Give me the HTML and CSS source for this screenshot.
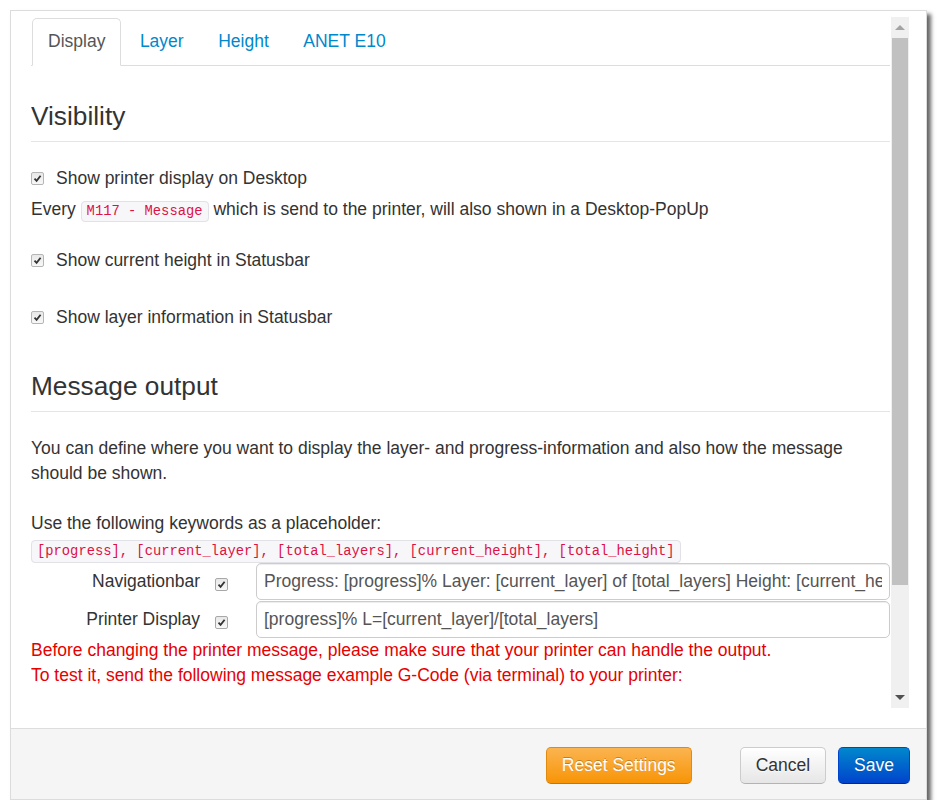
FILE: index.html
```html
<!DOCTYPE html>
<html>
<head>
<meta charset="utf-8">
<link rel="stylesheet" href="styles.css">
</head>
<body>
<div class="modal">
  <div class="modal-body">
    <div class="scroll-content">
      <ul class="nav-tabs">
        <li class="tab active">Display</li>
        <li class="tab">Layer</li>
        <li class="tab">Height</li>
        <li class="tab">ANET E10</li>
      </ul>

      <div class="legend legend-first">Visibility</div>

      <div class="check-row">
        <span class="cb"><svg width="9" height="9" viewBox="0 0 9 9"><path d="M1.5 4.6 L3.6 6.8 L7.6 1.8" fill="none" stroke="#333" stroke-width="1.8"/></svg></span>
        <span>Show printer display on Desktop</span>
      </div>
      <div class="text-row every">Every <code class="code">M117 - Message</code> which is send to the printer, will also shown in a Desktop-PopUp</div>

      <div class="check-row row-height">
        <span class="cb"><svg width="9" height="9" viewBox="0 0 9 9"><path d="M1.5 4.6 L3.6 6.8 L7.6 1.8" fill="none" stroke="#333" stroke-width="1.8"/></svg></span>
        <span>Show current height in Statusbar</span>
      </div>
      <div class="check-row row-layer">
        <span class="cb"><svg width="9" height="9" viewBox="0 0 9 9"><path d="M1.5 4.6 L3.6 6.8 L7.6 1.8" fill="none" stroke="#333" stroke-width="1.8"/></svg></span>
        <span>Show layer information in Statusbar</span>
      </div>

      <div class="legend legend-second">Message output</div>

      <p class="para">You can define where you want to display the layer- and progress-information and also how the message should be shown.</p>
      <p class="para para-use">Use the following keywords as a placeholder:</p>
      <div class="keywords"><code class="code">[progress], [current_layer], [total_layers], [current_height], [total_height]</code></div>

      <div class="form-row">
        <label class="control-label">Navigationbar</label>
        <span class="cb cb-form"><svg width="9" height="9" viewBox="0 0 9 9"><path d="M1.5 4.6 L3.6 6.8 L7.6 1.8" fill="none" stroke="#333" stroke-width="1.8"/></svg></span>
        <input class="input" type="text" value="Progress: [progress]% Layer: [current_layer] of [total_layers] Height: [current_height]/[total_height]">
      </div>
      <div class="form-row">
        <label class="control-label">Printer Display</label>
        <span class="cb cb-form"><svg width="9" height="9" viewBox="0 0 9 9"><path d="M1.5 4.6 L3.6 6.8 L7.6 1.8" fill="none" stroke="#333" stroke-width="1.8"/></svg></span>
        <input class="input" type="text" value="[progress]% L=[current_layer]/[total_layers]">
      </div>

      <div class="warn">Before changing the printer message, please make sure that your printer can handle the output.</div>
      <div class="warn">To test it, send the following message example G-Code (via terminal) to your printer:</div>
    </div>
    <div class="scrollbar">
      <div class="sb-btn"><span class="arrow-up"></span></div>
      <div class="sb-thumb"></div>
      <div class="sb-track"></div>
      <div class="sb-btn"><span class="arrow-down"></span></div>
    </div>
  </div>
  <div class="modal-footer">
    <button class="btn btn-warning">Reset Settings</button>
    <button class="btn btn-default btn-cancel">Cancel</button>
    <button class="btn btn-primary">Save</button>
  </div>
</div>
</body>
</html>
```

FILE: styles.css
```css
* { box-sizing: border-box; }
html, body { margin: 0; padding: 0; background: #fff; }
body {
  font-family: "Liberation Sans", Arial, sans-serif;
  font-size: 17.5px;
  line-height: 25px;
  color: #333;
}

.modal {
  margin: 10px 0 0 10px;
  width: 917px;
  height: 790px;
  border: 1px solid #dcdcdc;
  background: #fff;
  box-shadow: 4px 4px 4px rgba(0, 0, 0, 0.6);
  display: flex;
  flex-direction: column;
}

.modal-body {
  height: 717px;
  padding: 6px 17px 20px 20px;
  display: flex;
}

.scroll-content {
  flex: 1;
  overflow: hidden;
  padding: 1px 1px 0 0;
}

/* tabs */
.nav-tabs {
  list-style: none;
  margin: 0;
  padding: 0 0 0 1px;
  display: flex;
  border-bottom: 1px solid #ddd;
  height: 48px;
}
.tab {
  padding: 10px 15px 11px 15px;
  margin-right: 2.5px;
  color: #0088cc;
  border: 1px solid transparent;
  border-radius: 5px 5px 0 0;
  line-height: 25px;
}
.tab.active {
  color: #555;
  border-color: #ddd;
  border-bottom-color: #fff;
  background: #fff;
  height: 48px;
}

/* legends */
.legend {
  font-size: 26.25px;
  line-height: 50px;
  height: 51px;
  border-bottom: 1px solid #e5e5e5;
  color: #333;
}
.legend-first { margin-top: 25px; margin-bottom: 24px; }
.legend-second { margin-top: 31px; margin-bottom: 24px; }

.check-row {
  display: flex;
  align-items: center;
  height: 25px;
  gap: 12px;
}
.row-height { margin-top: 26px; }
.row-layer { margin-top: 32px; }

.cb {
  width: 13px;
  height: 13px;
  border: 1px solid #b5b5b5;
  border-radius: 2px;
  background: linear-gradient(#e8e8e8, #f8f8f8);
  display: inline-flex;
  align-items: center;
  justify-content: center;
  flex: none;
}

.text-row { height: 25px; }
.every { margin-top: 6px; }

.code {
  font-family: "Liberation Mono", "DejaVu Sans Mono", monospace;
  font-size: 13.8px;
  color: #dd1144;
  background: #f7f7f9;
  border: 1px solid #e1e1e8;
  border-radius: 4px;
  padding: 2px 5px;
  white-space: nowrap;
}

.para { margin: 24px 0 0 0; }
.para-use { margin-top: 25px; }

.keywords {
  height: 25px;
  margin-top: 1px;
  line-height: 24px;
}
.keywords .code { padding: 3px 5px; }

.form-row {
  display: flex;
  align-items: center;
  height: 37px;
  margin-top: 1px;
}
.form-row + .form-row { margin-top: 1px; }
.control-label {
  width: 169px;
  text-align: right;
  flex: none;
}
.cb-form {
  margin-left: 15px;
  margin-right: 28px;
  margin-top: 6px;
  border-color: #a8a8a8;
}
.input {
  flex: 1;
  height: 37px;
  padding: 5px 7px;
  font-family: "Liberation Sans", Arial, sans-serif;
  font-size: 17.5px;
  color: #555;
  border: 1px solid #ccc;
  border-radius: 5px;
  box-shadow: inset 0 1px 1px rgba(0, 0, 0, 0.075);
  min-width: 0;
}

.warn {
  color: #e60000;
  height: 25px;
}
.warn:first-of-type { margin-top: 0; }
.form-row + .warn { margin-top: 0; }

/* scrollbar */
.scrollbar {
  width: 18px;
  background: #f0f0f0;
  display: flex;
  flex-direction: column;
  flex: none;
}
.sb-btn {
  height: 21px;
  display: flex;
  align-items: center;
  justify-content: center;
}
.arrow-up {
  width: 0; height: 0;
  border-left: 5px solid transparent;
  border-right: 5px solid transparent;
  border-bottom: 5px solid #a3a3a3;
}
.arrow-down {
  width: 0; height: 0;
  border-left: 5px solid transparent;
  border-right: 5px solid transparent;
  border-top: 5px solid #505050;
}
.sb-thumb {
  height: 547px;
  margin: 0 1px;
  background: #c1c1c1;
}
.sb-track { flex: 1; }

/* footer */
.modal-footer {
  flex: 1;
  border-top: 1px solid #ddd;
  background: #f5f5f5;
  display: flex;
  justify-content: flex-end;
  align-items: flex-start;
  padding: 18px 16px 0 0;
}
.btn {
  font-family: "Liberation Sans", Arial, sans-serif;
  font-size: 17.5px;
  line-height: 25px;
  height: 37px;
  padding: 5px 15px;
  border-radius: 5px;
  border: 1px solid;
  cursor: pointer;
}
.btn-warning {
  color: #fff;
  background: linear-gradient(#fbb450, #f89406);
  border-color: #e08a10 #e08a10 #c67605;
  text-shadow: 0 -1px 0 rgba(0, 0, 0, 0.25);
  margin-right: 48px;
}
.btn-default {
  color: #333;
  background: linear-gradient(#ffffff, #e6e6e6);
  border-color: #ccc #ccc #b3b3b3;
  text-shadow: 0 1px 1px rgba(255, 255, 255, 0.75);
  margin-right: 12px;
}
.btn-primary {
  color: #fff;
  background: linear-gradient(#0088cc, #0044cc);
  border-color: #0044cc #0044cc #002a80;
  text-shadow: 0 -1px 0 rgba(0, 0, 0, 0.25);
}
```
